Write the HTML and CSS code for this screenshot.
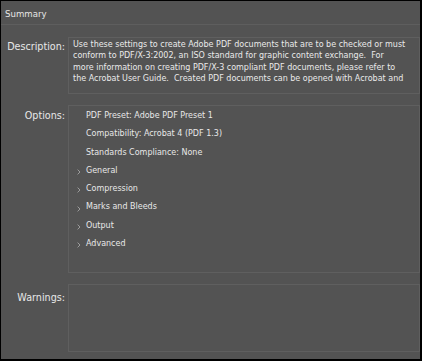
FILE: index.html
```html
<!DOCTYPE html>
<html>
<head>
<meta charset="utf-8">
<link rel="stylesheet" href="styles.css">
</head>
<body>
<div class="panel">
  <div class="header">Summary</div>
  <div class="row row-desc">
    <div class="label">Description:</div>
    <div class="box box-desc">
      <div class="desc-text"><span class="ln">Use these settings to create Adobe PDF documents that are to be checked or must</span><span class="ln">conform to PDF/X-3:2002, an ISO standard for graphic content exchange.  For</span><span class="ln">more information on creating PDF/X-3 compliant PDF documents, please refer to</span><span class="ln">the Acrobat User Guide.  Created PDF documents can be opened with Acrobat and</span></div>
    </div>
  </div>
  <div class="row row-opts">
    <div class="label">Options:</div>
    <div class="box box-opts">
      <div class="opt">PDF Preset: Adobe PDF Preset 1</div>
      <div class="opt">Compatibility: Acrobat 4 (PDF 1.3)</div>
      <div class="opt">Standards Compliance: None</div>
      <div class="opt opt-group"><span class="chev"><svg width="4" height="6" viewBox="0 0 4 6"><polyline points="0.6,0.6 3,3 0.6,5.4" fill="none" stroke="#9c9c9c" stroke-width="1"/></svg></span>General</div>
      <div class="opt opt-group"><span class="chev"><svg width="4" height="6" viewBox="0 0 4 6"><polyline points="0.6,0.6 3,3 0.6,5.4" fill="none" stroke="#9c9c9c" stroke-width="1"/></svg></span>Compression</div>
      <div class="opt opt-group"><span class="chev"><svg width="4" height="6" viewBox="0 0 4 6"><polyline points="0.6,0.6 3,3 0.6,5.4" fill="none" stroke="#9c9c9c" stroke-width="1"/></svg></span>Marks and Bleeds</div>
      <div class="opt opt-group"><span class="chev"><svg width="4" height="6" viewBox="0 0 4 6"><polyline points="0.6,0.6 3,3 0.6,5.4" fill="none" stroke="#9c9c9c" stroke-width="1"/></svg></span>Output</div>
      <div class="opt opt-group"><span class="chev"><svg width="4" height="6" viewBox="0 0 4 6"><polyline points="0.6,0.6 3,3 0.6,5.4" fill="none" stroke="#9c9c9c" stroke-width="1"/></svg></span>Advanced</div>
    </div>
  </div>
  <div class="row row-warn">
    <div class="label">Warnings:</div>
    <div class="box box-warn"></div>
  </div>
</div>
</body>
</html>
```
FILE: styles.css
```css
html, body {
  margin: 0;
  padding: 0;
}
body {
  background: #000;
  width: 422px;
  height: 361px;
  overflow: hidden;
}
.panel {
  margin: 1px 0 0 1px;
  width: 419px;
  height: 358px;
  background: #535353;
  font-family: "DejaVu Sans", sans-serif;
  color: #e6e6e6;
  display: flex;
  flex-direction: column;
}
.header {
  height: 19px;
  padding: 4px 0 0 4px;
  line-height: 19px;
  font-size: 8.6px;
  border-bottom: 1px solid #5e5e5e;
  color: #e6e6e6;
}
.row {
  display: grid;
  grid-template-columns: 67px 1fr;
  margin-top: 11px;
}
.row-desc {
  margin-top: 12px;
}
.label {
  text-align: right;
  padding-right: 3px;
  font-size: 9.6px;
  line-height: 12px;
  color: #e8e8e8;
}
.row-desc .label { padding-top: 4px; }
.row-opts .label { padding-top: 5px; }
.row-warn .label { padding-top: 8px; }
.box {
  border: 1px solid #5f5f5f;
  box-sizing: border-box;
}
.box-desc { height: 57px; }
.box-opts { height: 168px; padding-top: 1px; }
.box-warn { height: 68px; }
.desc-text {
  padding: 1px 0 0 4px;
  font-size: 8px;
  line-height: 11.3px;
  color: #eaeaea;
}
.ln {
  display: block;
  white-space: pre;
}
.opt {
  height: 18.3px;
  line-height: 18.3px;
  padding-left: 17px;
  font-size: 8px;
  color: #e8e8e8;
  white-space: nowrap;
}
.opt-group {
  padding-left: 8px;
  display: flex;
  align-items: center;
}
.chev {
  width: 9px;
  display: flex;
  align-items: center;
  padding-top: 2px;
}
.chev svg { display: block; }
```
